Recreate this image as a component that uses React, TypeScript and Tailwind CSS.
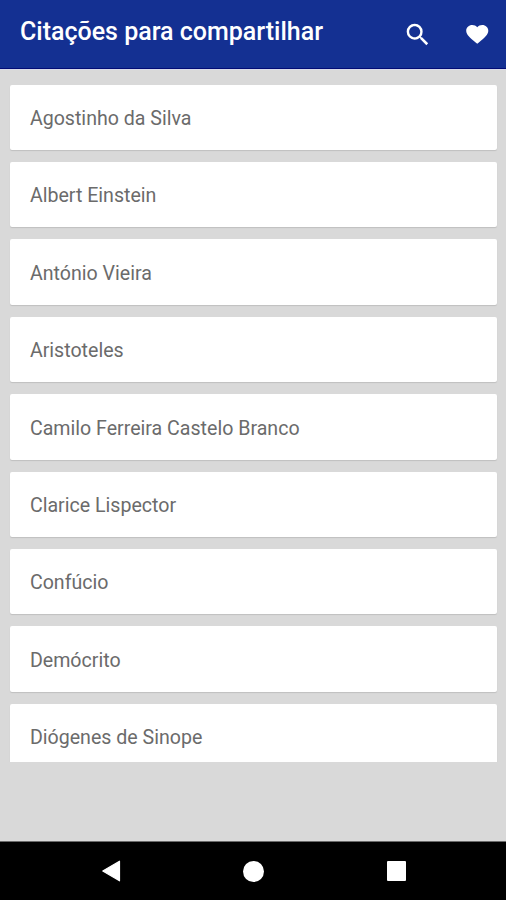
import { MdFavorite, MdSearch } from 'react-icons/md'

const authors = [
  'Agostinho da Silva',
  'Albert Einstein',
  'António Vieira',
  'Aristoteles',
  'Camilo Ferreira Castelo Branco',
  'Clarice Lispector',
  'Confúcio',
  'Demócrito',
  'Diógenes de Sinope',
]

type AuthorCardProps = {
  name: string
}

const AuthorCard = ({ name }: AuthorCardProps) => {
  return (
    <li className="flex h-[65.4px] shrink-0 items-center rounded-[2px] bg-white pt-[3px] pr-5 pl-[19.5px] shadow-[0_1px_1px_rgba(0,0,0,0.12)]">
      <span className="text-[19.6px] text-[#6b6b6b]">{name}</span>
    </li>
  )
}

const Header = () => {
  return (
    <header className="flex h-[69px] shrink-0 items-center justify-between border-b border-[#020b75] bg-[#143092] pr-[15.7px] pl-5 text-white">
      <h1 className="pb-[5px] text-[25px] font-medium">Citações para compartilhar</h1>

      <div className="flex items-center gap-[31.3px] pt-[1.4px]">
        <button aria-label="Pesquisar">
          <MdSearch className="h-[29.5px] w-[29.5px]" />
        </button>
        <button aria-label="Favoritos">
          <MdFavorite className="h-[24.5px] w-[26.5px]" preserveAspectRatio="none" />
        </button>
      </div>
    </header>
  )
}

const NavigationBar = () => {
  return (
    <nav className="flex h-[59px] shrink-0 items-center justify-between border-t border-[#6b6b6b] bg-black pr-[100px] pl-[101px] text-white">
      <svg viewBox="0 0 20 22" className="h-[22px] w-5" fill="currentColor">
        <path
          d="M1.8 11 18.5 1.2v19.6z"
          stroke="currentColor"
          strokeWidth="1.2"
          strokeLinejoin="round"
        />
      </svg>
      <span className="h-[21px] w-[21px] rounded-full bg-white" />
      <span className="h-[19.5px] w-[19.5px] rounded-[1px] bg-white" />
    </nav>
  )
}

export default function App() {
  return (
    <div className="flex h-[900px] w-[506px] flex-col bg-[#d9d9d9] font-[Roboto,sans-serif]">
      <Header />

      <main className="min-h-0 flex-1 border-t border-[#d9dae9]">
        <ul className="flex h-[692px] flex-col gap-3 overflow-hidden pt-[14.6px] pr-[9px] pl-[10.4px]">
          {authors.map((author) => (
            <AuthorCard key={author} name={author} />
          ))}
        </ul>
      </main>

      <NavigationBar />
    </div>
  )
}
